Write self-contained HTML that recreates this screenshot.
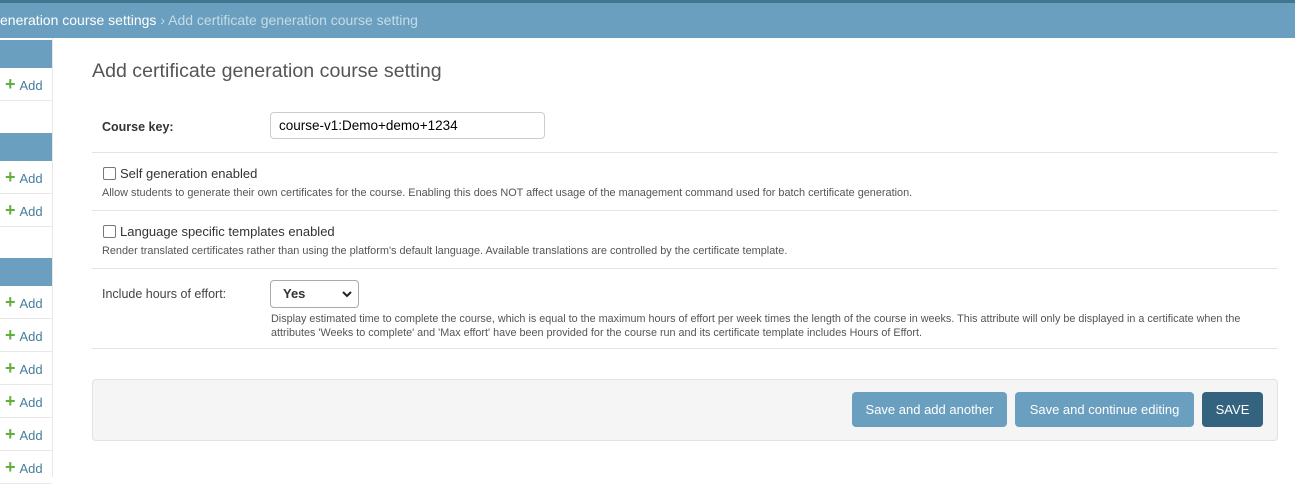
<!DOCTYPE html>
<html><head><style>
body{margin:0;width:1295px;height:477px;overflow:hidden;background:#fff;font-family:"Liberation Sans",Arial,sans-serif;color:#333;position:relative}
.top{position:absolute;left:0;top:0;width:1295px;height:3px;background:#417690}
.bc{position:absolute;left:0;top:3px;width:1295px;height:35px;background:#6a9fbf;color:#fff;font-size:14px;line-height:35px;white-space:nowrap}
.bc span{color:#c5dce8}
.side{position:absolute;left:0;top:38px;width:52px;height:439px;border-right:1px solid #e8e8e8}
.sh{position:absolute;left:0;width:52px;height:28px;background:#6a9fbf}
.sr{position:absolute;left:0;width:52px;height:32px;border-bottom:1px solid #e8e8e8;font-size:13px;color:#447e9b;line-height:32px}
.sr b{color:#5fb13b;font-size:18px;margin-left:5px;margin-right:4px;font-weight:900}
.a{position:absolute;white-space:nowrap}
h1{position:absolute;left:92px;top:60px;margin:0;font-weight:300;font-size:19.6px;color:#555}
.line{position:absolute;left:92px;width:1186px;height:1px;background:#e4e4e4}
.help{font-size:10.9px;color:#555}
.lbl{font-size:12.5px}
input.t{position:absolute;left:270px;top:112px;border:1px solid #ccc;border-radius:4px;font:13.5px "Liberation Sans",sans-serif;padding:0 0 0 8px;box-sizing:border-box;width:275px;height:27px}
.cb{position:absolute;width:11px;height:11px;border:1px solid #777;border-radius:2px;background:#fff}
.sel{position:absolute;left:270px;top:280px;width:89px;height:28px;border:1px solid #aaa;border-radius:4px;box-sizing:border-box;font-size:13px;font-weight:bold;line-height:26px;padding-left:12px}
.sub{position:absolute;left:92px;top:379px;width:1184px;height:60px;background:#f5f5f5;border:1px solid #e2e2e2;border-radius:4px}
.btn{position:absolute;top:392px;height:35px;border-radius:4px;background:#6a9fbf;color:#fff;font-size:13px;line-height:35px;text-align:center}
</style></head><body>
<div class="top"></div>
<div class="bc">eneration course settings <span>› Add certificate generation course setting</span></div>
<div class="side">
<div class="sh" style="top:2px"></div>
<div class="sr" style="top:30px"><b>+</b>Add</div>
<div class="sr" style="top:63px"></div>
<div class="sh" style="top:95px"></div>
<div class="sr" style="top:123px"><b>+</b>Add</div>
<div class="sr" style="top:156px"><b>+</b>Add</div>
<div class="sr" style="top:189px"></div>
<div class="sh" style="top:220px"></div>
<div class="sr" style="top:248px"><b>+</b>Add</div>
<div class="sr" style="top:281px"><b>+</b>Add</div>
<div class="sr" style="top:314px"><b>+</b>Add</div>
<div class="sr" style="top:347px"><b>+</b>Add</div>
<div class="sr" style="top:380px"><b>+</b>Add</div>
<div class="sr" style="top:413px"><b>+</b>Add</div>
</div>
<h1>Add certificate generation course setting</h1>
<div class="a lbl" style="left:102px;top:120px;font-weight:bold;color:#333">Course key:</div>
<input class="t" value="course-v1:Demo+demo+1234">
<div class="line" style="top:152px"></div>
<div class="cb" style="left:103px;top:167px"></div>
<div class="a" style="left:120px;top:166px;font-size:13px">Self generation enabled</div>
<div class="a help" style="left:102px;top:187px">Allow students to generate their own certificates for the course. Enabling this does NOT affect usage of the management command used for batch certificate generation.</div>
<div class="line" style="top:210px"></div>
<div class="cb" style="left:103px;top:225px"></div>
<div class="a" style="left:120px;top:224px;font-size:13px">Language specific templates enabled</div>
<div class="a help" style="left:102px;top:245px">Render translated certificates rather than using the platform's default language. Available translations are controlled by the certificate template.</div>
<div class="line" style="top:268px"></div>
<div class="a lbl" style="left:102px;top:287px;color:#444">Include hours of effort:</div>
<div class="sel">Yes<svg style="position:absolute;right:6px;top:10px" width="10" height="7" viewBox="0 0 10 7"><path d="M1 1l4 4 4-4" fill="none" stroke="#222" stroke-width="2"/></svg></div>
<div class="a help" style="left:271px;top:312px;line-height:14px;font-size:10.8px">Display estimated time to complete the course, which is equal to the maximum hours of effort per week times the length of the course in weeks. This attribute will only be displayed in a certificate when the<br>attributes 'Weeks to complete' and 'Max effort' have been provided for the course run and its certificate template includes Hours of Effort.</div>
<div class="line" style="top:348px"></div>
<div class="sub"></div>
<div class="btn" style="left:852px;width:155px">Save and add another</div>
<div class="btn" style="left:1015px;width:179px">Save and continue editing</div>
<div class="btn" style="left:1202px;width:61px;background:#33637e">SAVE</div>
</body></html>
